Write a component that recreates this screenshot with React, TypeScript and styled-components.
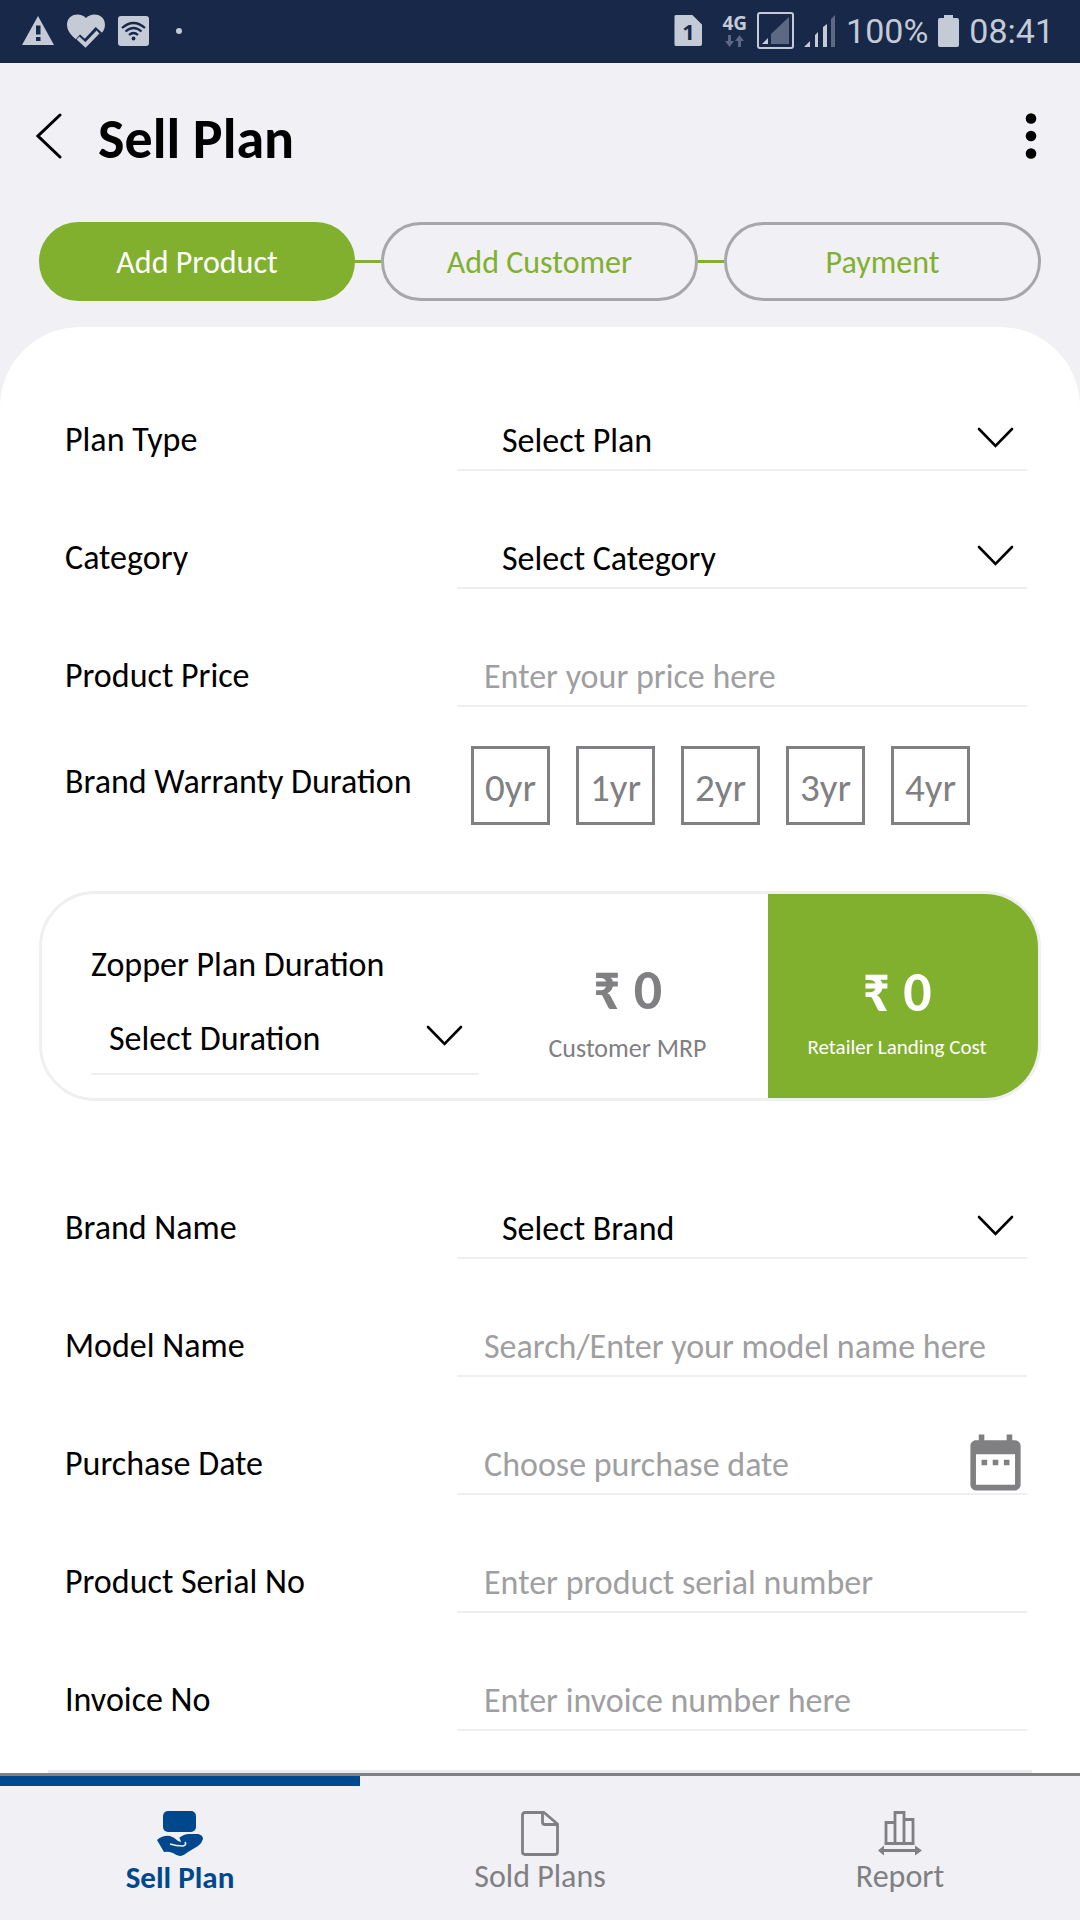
import React, { useId, useState } from "react";
import styled, { createGlobalStyle } from "styled-components";

const color = {
  navy: "#182848",
  status: "#c4cad6",
  page: "#f0f0f5",
  green: "#80b02d",
  blue: "#00488d",
  grey: "#808083",
  hint: "#9f9fa2",
  pill: "#a7a7aa",
  line: "#efeff1",
};

const GlobalStyle = createGlobalStyle`
  *, *::before, *::after { box-sizing: border-box; }
  body { margin: 0; background: ${color.page}; }
  body, button, input, select {
    font-family: Calibri, Carlito, Lato, "Noto Sans", sans-serif;
  }
  svg { display: block; flex: none; }
`;

const Page = styled.div`
  display: flex;
  flex-direction: column;
  min-height: 100vh;
  color: #000;
`;

/* ---------- status bar ---------- */

const StatusBar = styled.div`
  display: flex;
  align-items: center;
  justify-content: space-between;
  height: 63px;
  padding: 0 26px 2px 22px;
  background: ${color.navy};
  color: ${color.status};
  font-family: Roboto, sans-serif;
  font-size: 34px;
`;

const StatusGroup = styled.div<{ $gap: number }>`
  display: flex;
  align-items: center;
  gap: ${(p) => p.$gap}px;
`;

const Dot = styled.span`
  width: 6px;
  height: 6px;
  margin-left: 14px;
  border-radius: 50%;
  background: currentColor;
`;

const Sim = styled.span`
  width: 28px;
  height: 31px;
  margin-right: 10px;
  border-radius: 2px;
  clip-path: polygon(0 0, 64% 0, 100% 32%, 100% 100%, 0 100%);
  background: currentColor;
  color: ${color.status};
  text-align: center;
`;

const SimNumber = styled.span`
  display: block;
  color: ${color.navy};
  font: 700 22px/33px "Open Sans", sans-serif;
`;

const Network = styled.span`
  display: flex;
  flex-direction: column;
  align-items: center;
  gap: 3px;
  font: 700 19px/17px "Open Sans", sans-serif;
`;

/* ---------- header ---------- */

const Header = styled.header`
  display: flex;
  align-items: center;
  height: 146px;
  padding: 0 42px 0 36px;
`;

const IconButton = styled.button`
  display: flex;
  align-items: center;
  justify-content: center;
  padding: 0;
  border: 0;
  background: none;
  color: inherit;
  cursor: pointer;
`;

const Title = styled.h1`
  flex: 1;
  margin: 0 0 0 36px;
  padding-top: 5px;
  font-size: 56px;
  line-height: 64px;
  font-weight: 700;
`;

const Steps = styled.ol`
  display: flex;
  align-items: center;
  margin: 13px 39px 26px;
  padding: 0;
  list-style: none;
`;

const Step = styled.li`
  display: flex;
  flex: 1;
  align-items: center;

  & + &::before {
    content: "";
    width: 26px;
    height: 3px;
    background: ${color.green};
  }
  &:first-child {
    flex: 0 1 316px;
  }
`;

const StepButton = styled.button<{ $active?: boolean }>`
  flex: 1;
  height: 79px;
  padding: 2px 0 0;
  border: 3px solid ${(p) => (p.$active ? color.green : color.pill)};
  border-radius: 40px;
  background: ${(p) => (p.$active ? color.green : "transparent")};
  color: ${(p) => (p.$active ? "#fff" : color.green)};
  font-size: 32px;
  cursor: pointer;
`;

/* ---------- form ---------- */

const Sheet = styled.main`
  flex: 1;
  padding-top: 26px;
  border-radius: 80px 80px 0 0;
  background: #fff;
`;

const Fields = styled.div`
  padding: 0 53px 0 65px;
`;

const Row = styled.div`
  display: grid;
  grid-template-columns: 392fr 570fr;
  align-items: end;
  height: 118px;
`;

const Label = styled.label`
  font-size: 34px;
  line-height: 62px;
  white-space: nowrap;
`;

const Control = styled.div`
  display: flex;
  align-items: center;
  height: 62px;
  border-bottom: 2px solid ${color.line};
`;

const TextInput = styled.input`
  flex: 1;
  min-width: 0;
  height: 100%;
  padding: 2px 0 0 27px;
  border: 0;
  outline: 0;
  background: none;
  font-size: 34px;

  &::placeholder {
    color: ${color.hint};
    opacity: 1;
  }
`;

const SelectBox = styled.div<{ $inset: number; $tall?: boolean }>`
  display: grid;
  grid-template-columns: 1fr;
  align-items: center;
  height: ${(p) => (p.$tall ? 74 : 62)}px;
  border-bottom: 2px solid ${color.line};

  > * {
    grid-area: 1 / 1;
  }
  > svg {
    justify-self: end;
    margin: 0 ${(p) => (p.$tall ? 16 : 13)}px 2px 0;
    pointer-events: none;
  }
  > select {
    width: 100%;
    height: 100%;
    padding: 2px 60px 0 ${(p) => p.$inset}px;
    border: 0;
    outline: 0;
    appearance: none;
    background: none;
    color: #000;
    font-size: 34px;
  }
`;

const CalendarButton = styled(IconButton)`
  margin: 0 -2px 2px 0;
  color: ${color.grey};
`;

const WarrantyRow = styled.fieldset`
  display: grid;
  grid-template-columns: 392fr 570fr;
  margin: 39px 0 66px;
  padding: 0;
  border: 0;
`;

const WarrantyTitle = styled.span`
  font-size: 34px;
  line-height: 72px;
  white-space: nowrap;
`;

const Years = styled.div`
  display: flex;
  gap: 26px;
  padding-left: 14px;
`;

const Year = styled.label`
  display: grid;
  place-items: center;
  width: 79px;
  height: 79px;
  padding-top: 4px;
  border: 3px solid ${color.grey};
  color: ${color.grey};
  font-size: 39px;
  cursor: pointer;

  > * {
    grid-area: 1 / 1;
  }
  > input {
    width: 100%;
    height: 100%;
    margin: 0;
    opacity: 0;
  }
  &:has(input:checked) {
    border-color: ${color.green};
    color: ${color.green};
  }
`;

const PlanCard = styled.section`
  display: grid;
  grid-template-columns: 403fr 323fr 270fr;
  height: 210px;
  margin: 0 39px 40px;
  overflow: hidden;
  border: 3px solid ${color.line};
  border-radius: 56px;
`;

const PlanDuration = styled.div`
  padding: 41px 0 0 49px;
  margin-right: -34px;

  > label {
    display: block;
    line-height: 60px;
  }
  > div {
    margin-top: 6px;
  }
`;

const Price = styled.div<{ $filled?: boolean }>`
  display: flex;
  flex-direction: column;
  align-items: center;
  justify-content: center;
  gap: ${(p) => (p.$filled ? 11 : 14)}px;
  padding: ${(p) => (p.$filled ? "35px 12px 0 0" : "34px 0 0 42px")};
  background: ${(p) => (p.$filled ? color.green : "transparent")};
  color: ${(p) => (p.$filled ? "#fff" : color.grey)};
`;

const Amount = styled.strong`
  font-size: 56px;
  line-height: 56px;
  font-weight: 700;
`;

const Caption = styled.span<{ $small?: boolean }>`
  font-size: ${(p) => (p.$small ? 21 : 26)}px;
  line-height: 32px;
  white-space: nowrap;
`;

const SectionEdge = styled.hr`
  height: 3px;
  margin: 39px 48px 0;
  border: 0;
  background: #ebebed;
`;

/* ---------- bottom navigation ---------- */

const Nav = styled.nav`
  position: sticky;
  bottom: 0;
  display: grid;
  grid-template-columns: repeat(3, 1fr);
  height: 147px;
  border-top: 3px solid ${color.grey};
  background: ${color.page};
`;

const NavLink = styled.a<{ $active?: boolean }>`
  display: flex;
  flex-direction: column;
  align-items: center;
  padding-top: 25px;
  border-top: 10px solid ${(p) => (p.$active ? color.blue : "transparent")};
  color: ${(p) => (p.$active ? color.blue : color.grey)};
  font-size: ${(p) => (p.$active ? 31 : 32)}px;
  line-height: 42px;
  font-weight: ${(p) => (p.$active ? 700 : 400)};
  text-decoration: none;
`;

/* ---------- drawings ---------- */

const Chevron = () => (
  <svg width="37" height="22" viewBox="0 0 37 22" fill="none" stroke="#000" strokeWidth="2.6" strokeLinecap="round">
    <path d="M2 2l16.500 17L35 2" />
  </svg>
);

const WarningIcon = () => (
  <svg width="32" height="30" viewBox="0 0 32 30">
    <path fill="currentColor" fillRule="evenodd" d="M16 0l16 29H0zM14 9.500v9h4.500v-9zM14 21v4h4.500v-4z" />
  </svg>
);

const HeartIcon = () => (
  <svg width="38" height="34" viewBox="0 0 38 34">
    <path fill="currentColor" d="M19 4C14-2 0-1 0 11c0 9 10 15 18 22 9-7 20-13 20-22C38-1 24-2 19 4z" />
    <path fill="none" stroke={color.navy} strokeWidth="9" d="M10 24l8 7 14-15" />
    <path fill="none" stroke="currentColor" strokeWidth="4" d="M11 24l7.500 7L31 18" />
  </svg>
);

const WifiIcon = () => (
  <svg width="31" height="30" viewBox="0 0 31 30">
    <rect width="31" height="30" rx="3" fill="currentColor" />
    <g fill="none" stroke={color.navy} strokeWidth="2.300">
      <path d="M4 12q11.500-10 23 0M7.500 15.500q8-7 16 0M11 19q4.500-4 9 0" />
    </g>
    <circle cx="15.500" cy="22.500" r="1.900" fill={color.navy} />
  </svg>
);

const DataArrows = () => (
  <svg width="19" height="12" viewBox="0 0 19 12" fill="#5b6784">
    <path d="M3 0h3v6h3l-4.500 6L0 6h3zM13 12h3V6h3l-4.500-6L10 6h3z" />
  </svg>
);

const BoxedSignal = () => (
  <svg width="37" height="37" viewBox="0 0 37 37">
    <rect x="1" y="1" width="35" height="35" rx="2" fill="none" stroke="currentColor" strokeWidth="2" />
    <path fill="#5d6885" d="M14 32V22L32 5v27z" />
    <path fill="currentColor" d="M5 32l6-6v6z" />
  </svg>
);

const Signal = () => (
  <svg width="32" height="32" viewBox="0 0 32 32" fill="currentColor">
    <path d="M0 32l6-6v6zM11 20l3-3v15h-3zM19 12l4-3v23h-4z" />
    <path fill="#5d6885" d="M27 4l4-4v32h-4z" />
  </svg>
);

const Battery = () => (
  <svg width="21" height="32" viewBox="0 0 21 32">
    <path fill="currentColor" d="M6 0h9v3h4q2 0 2 2v25q0 2-2 2H2q-2 0-2-2V5q0-2 2-2h4z" />
  </svg>
);

const BackIcon = () => (
  <svg width="26" height="46" viewBox="0 0 26 46" fill="none" stroke="#000" strokeWidth="3" strokeLinecap="round">
    <path d="M24 2L2 23l22 21" />
  </svg>
);

const MoreIcon = () => (
  <svg width="26" height="46" viewBox="0 0 26 46">
    <circle cx="19" cy="5.500" r="5.300" />
    <circle cx="19" cy="23" r="5.300" />
    <circle cx="19" cy="40.500" r="5.300" />
  </svg>
);

const CalendarIcon = () => (
  <svg width="67" height="67" viewBox="0 0 24 24" fill="currentColor">
    <path d="M9 11H7v2h2v-2zm4 0h-2v2h2v-2zm4 0h-2v2h2v-2zm2-7h-1V2h-2v2H8V2H6v2H5c-1.110 0-1.990.9-1.990 2L3 20a2 2 0 0 0 2 2h14c1.100 0 2-.9 2-2V6c0-1.100-.9-2-2-2zm0 16H5V9h14v11z" />
  </svg>
);

const HandIcon = () => (
  <svg width="46" height="45" viewBox="0 0 46 45" fill="currentColor">
    <rect x="6" width="33" height="21" rx="5" />
    <path d="M0 29q6-5 13-4 4 1 8 5l3 1q-1-4-2-4 5-4 10-4h9q5 1 5 5-1 4-5 7L31 41q-5 4-8 4-3 0-7-3-5-2-9-1z" />
    <path d="M13 33q6 2 13 2 4-1 2-4" fill="none" stroke={color.page} strokeWidth="1.600" />
  </svg>
);

const DocumentIcon = () => (
  <svg width="38" height="45" viewBox="0 0 38 45" fill="none" stroke="currentColor" strokeWidth="2.800" strokeLinejoin="round">
    <path d="M4 1.500h19L36.500 13v28q0 2.500-2.500 2.500H4q-2.500 0-2.500-2.500V4q0-2.500 2.500-2.500z" />
    <path d="M21.500 2v9q0 2.500 2.500 2.500h12" />
  </svg>
);

const ReportIcon = () => (
  <svg width="44" height="45" viewBox="0 0 44 45">
    <g fill="none" stroke="currentColor" strokeWidth="2.800">
      <path d="M8 32.500v-21h9v21M17 32.500V1.500h9v31M26 8.500h9v24M6.500 32.500h30M4 39.500h36" />
    </g>
    <path fill="currentColor" d="M0 39.500l6-5v10zM44 39.500l-7-5v10z" />
  </svg>
);

/* ---------- parts ---------- */

type SelectFieldProps = { id: string; option: string; inset?: number; tall?: boolean };

function SelectField({ id, option, inset = 45, tall }: SelectFieldProps) {
  return (
    <SelectBox $inset={inset} $tall={tall}>
      <select id={id}>
        <option>{option}</option>
      </select>
      <Chevron />
    </SelectBox>
  );
}

type FieldProps = { label: string; option?: string; placeholder?: string; calendar?: boolean };

function Field({ label, option, placeholder, calendar }: FieldProps) {
  const id = useId();
  return (
    <Row>
      <Label htmlFor={id}>{label}</Label>
      {option ? (
        <SelectField id={id} option={option} />
      ) : (
        <Control>
          <TextInput id={id} type="text" placeholder={placeholder} />
          {calendar && (
            <CalendarButton type="button" aria-label="Open calendar">
              <CalendarIcon />
            </CalendarButton>
          )}
        </Control>
      )}
    </Row>
  );
}

const years = ["0yr", "1yr", "2yr", "3yr", "4yr"];

export default function App() {
  const [year, setYear] = useState("");

  return (
    <Page>
      <GlobalStyle />
      <StatusBar>
        <StatusGroup $gap={13}>
          <WarningIcon />
          <HeartIcon />
          <WifiIcon />
          <Dot />
        </StatusGroup>
        <StatusGroup $gap={10}>
          <Sim>
            <SimNumber>1</SimNumber>
          </Sim>
          <Network>
            4G
            <DataArrows />
          </Network>
          <BoxedSignal />
          <Signal />
          <span>100%</span>
          <Battery />
          <span>08:41</span>
        </StatusGroup>
      </StatusBar>

      <Header>
        <IconButton type="button" aria-label="Back">
          <BackIcon />
        </IconButton>
        <Title>Sell Plan</Title>
        <IconButton type="button" aria-label="More options">
          <MoreIcon />
        </IconButton>
      </Header>

      <Steps>
        <Step>
          <StepButton type="button" $active>
            Add Product
          </StepButton>
        </Step>
        <Step>
          <StepButton type="button">Add Customer</StepButton>
        </Step>
        <Step>
          <StepButton type="button">Payment</StepButton>
        </Step>
      </Steps>

      <Sheet>
        <Fields>
          <Field label="Plan Type" option="Select Plan" />
          <Field label="Category" option="Select Category" />
          <Field label="Product Price" placeholder="Enter your price here" />
          <WarrantyRow aria-labelledby="warranty">
            <WarrantyTitle id="warranty">Brand Warranty Duration</WarrantyTitle>
            <Years>
              {years.map((y) => (
                <Year key={y}>
                  <input type="radio" name="warranty" checked={year === y} onChange={() => setYear(y)} />
                  <span>{y}</span>
                </Year>
              ))}
            </Years>
          </WarrantyRow>
        </Fields>

        <PlanCard>
          <PlanDuration>
            <Label htmlFor="duration">Zopper Plan Duration</Label>
            <SelectField id="duration" option="Select Duration" inset={18} tall />
          </PlanDuration>
          <Price>
            <Amount>₹ 0</Amount>
            <Caption>Customer MRP</Caption>
          </Price>
          <Price $filled>
            <Amount>₹ 0</Amount>
            <Caption $small>Retailer Landing Cost</Caption>
          </Price>
        </PlanCard>

        <Fields>
          <Field label="Brand Name" option="Select Brand" />
          <Field label="Model Name" placeholder="Search/Enter your model name here" />
          <Field label="Purchase Date" placeholder="Choose purchase date" calendar />
          <Field label="Product Serial No" placeholder="Enter product serial number" />
          <Field label="Invoice No" placeholder="Enter invoice number here" />
        </Fields>
        <SectionEdge />
      </Sheet>

      <Nav>
        <NavLink href="#sell" $active>
          <HandIcon />
          Sell Plan
        </NavLink>
        <NavLink href="#sold">
          <DocumentIcon />
          Sold Plans
        </NavLink>
        <NavLink href="#report">
          <ReportIcon />
          Report
        </NavLink>
      </Nav>
    </Page>
  );
}
